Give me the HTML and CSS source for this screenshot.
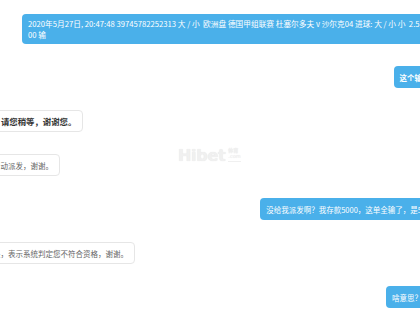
FILE: index.html
```html
<!DOCTYPE html>
<html lang="zh-CN">
<head>
  <meta charset="UTF-8">
  <title>在线客服</title>
  <meta name="viewport" content="width=device-width, initial-scale=1.0">
  <link rel="stylesheet" href="styles.css">
</head>
<body>
  <div class="chat">
    <div class="msg mine order">2020年5月27日, 20:47:48 39745782252313 大 / 小 &nbsp;欧洲盘 德国甲组联赛 杜塞尔多夫 v 沙尔克04 进球: 大 / 小 小 &nbsp;2.500 输</div>
    <div class="msg mine strong">这个输</div>
    <div class="msg theirs notice">请您稍等，谢谢您。</div>
    <div class="msg theirs">自动派发，谢谢。</div>
    <div class="msg mine">没给我派发啊？我存款5000，这单全输了，是5</div>
    <div class="msg theirs">是，表示系统判定您不符合资格，谢谢。</div>
    <div class="msg mine">啥意思？</div>
  </div>

  <!-- 水印 -->
  <div class="watermark">
    <span class="wm-main">Hibet</span>
    <span class="wm-sub"><b>体育</b><i>.com</i></span>
  </div>
</body>
</html>
```

FILE: styles.css
```css
body {
  margin: 0;
  background-color: #ffffff;
  font-family: "Noto Sans CJK SC", "Liberation Sans", sans-serif;
  overflow: hidden;
  position: relative;
  height: 315px;
}

.chat {
  display: flex;
  flex-direction: column;
  gap: 22px;
  padding-top: 14px;
  margin: 0 -8px 0 -14px;
}

.msg {
  max-width: 406px;
  box-sizing: border-box;
  padding: 5.5px 6px;
  font-size: 7.5px;
  line-height: 11px;
  border-radius: 4px;
  word-break: break-all;
}

.mine {
  align-self: flex-end;
  background-color: #4ab0ea;
  color: #ffffff;
}

.theirs {
  align-self: flex-start;
  background-color: #ffffff;
  border: 1px solid #e6e6e6;
  padding: 4.5px 6px;
  color: #666666;
}

.order {
  padding: 4px 6px;
  font-size: 7.7px;
}

.strong {
  font-weight: bold;
}

.notice {
  padding-left: 14px;
  font-size: 8.4px;
  font-weight: bold;
  color: #333333;
}

.watermark {
  position: absolute;
  left: 178px;
  top: 146px;
  display: flex;
  align-items: flex-end;
  gap: 3px;
  color: #f0f0f0;
}

.wm-main {
  font-family: "DejaVu Sans", sans-serif;
  font-size: 16px;
  line-height: 18px;
  font-weight: bold;
  letter-spacing: -0.3px;
  text-shadow: 0 0 1px #e2e2e2;
}

.wm-sub {
  display: flex;
  flex-direction: column;
  margin-bottom: 3px;
  padding-bottom: 1px;
  border-bottom: 1px solid #f0f0f0;
  font-size: 5px;
  line-height: 7px;
  text-shadow: 0 0 1px #e2e2e2;
}

.wm-sub b {
  font-family: "Noto Sans CJK SC", sans-serif;
}

.wm-sub i {
  font-style: normal;
  font-family: "DejaVu Sans", sans-serif;
}
```
